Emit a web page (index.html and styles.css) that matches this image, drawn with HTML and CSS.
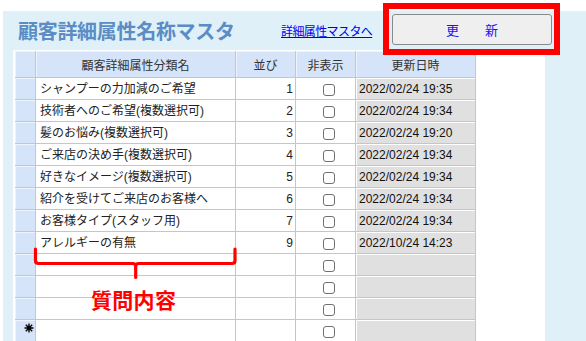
FILE: index.html
```html
<!DOCTYPE html>
<html lang="ja">
<head>
<meta charset="utf-8">
<title>顧客詳細属性名称マスタ</title>
<link rel="stylesheet" href="styles.css">
</head>
<body>
<div class="panel">
  <div class="topbar">
    <h1 class="title">顧客詳細属性名称マスタ</h1>
    <a class="link" href="#">詳細属性マスタへ</a>
    <button class="btn" type="button">更　　新</button>
  </div>
  <div class="sheet">
    <table class="grid">
      <colgroup>
        <col class="c-sel"><col class="c-name"><col class="c-ord"><col class="c-hide"><col class="c-date">
      </colgroup>
      <thead>
        <tr>
          <th class="sel"></th>
          <th>顧客詳細属性分類名</th>
          <th>並び</th>
          <th>非表示</th>
          <th>更新日時</th>
        </tr>
      </thead>
      <tbody>
        <tr><td class="sel"></td><td class="name">シャンプーの力加減のご希望</td><td class="ord">1</td><td class="hide"><input type="checkbox"></td><td class="date">2022/02/24 19:35</td></tr>
        <tr><td class="sel"></td><td class="name">技術者へのご希望(複数選択可)</td><td class="ord">2</td><td class="hide"><input type="checkbox"></td><td class="date">2022/02/24 19:34</td></tr>
        <tr><td class="sel"></td><td class="name">髪のお悩み(複数選択可)</td><td class="ord">3</td><td class="hide"><input type="checkbox"></td><td class="date">2022/02/24 19:20</td></tr>
        <tr><td class="sel"></td><td class="name">ご来店の決め手(複数選択可)</td><td class="ord">4</td><td class="hide"><input type="checkbox"></td><td class="date">2022/02/24 19:34</td></tr>
        <tr><td class="sel"></td><td class="name">好きなイメージ(複数選択可)</td><td class="ord">5</td><td class="hide"><input type="checkbox"></td><td class="date">2022/02/24 19:34</td></tr>
        <tr><td class="sel"></td><td class="name">紹介を受けてご来店のお客様へ</td><td class="ord">6</td><td class="hide"><input type="checkbox"></td><td class="date">2022/02/24 19:34</td></tr>
        <tr><td class="sel"></td><td class="name">お客様タイプ(スタッフ用)</td><td class="ord">7</td><td class="hide"><input type="checkbox"></td><td class="date">2022/02/24 19:34</td></tr>
        <tr><td class="sel"></td><td class="name">アレルギーの有無</td><td class="ord">9</td><td class="hide"><input type="checkbox"></td><td class="date">2022/10/24 14:23</td></tr>
        <tr><td class="sel"></td><td class="name"></td><td class="ord"></td><td class="hide"><input type="checkbox"></td><td class="date"></td></tr>
        <tr><td class="sel"></td><td class="name"></td><td class="ord"></td><td class="hide"><input type="checkbox"></td><td class="date"></td></tr>
        <tr><td class="sel"></td><td class="name"></td><td class="ord"></td><td class="hide"><input type="checkbox"></td><td class="date"></td></tr>
        <tr><td class="sel new"><svg class="star" width="10" height="10" viewBox="0 0 10 10"><path d="M5 0.5V9.5M0.5 5H9.5M1.8 1.8L8.2 8.2M8.2 1.8L1.8 8.2" stroke="#000" stroke-width="1.4" fill="none"/></svg></td><td class="name"></td><td class="ord"></td><td class="hide"><input type="checkbox"></td><td class="date"></td></tr>
      </tbody>
    </table>
  </div>
</div>

<div class="callout-box"></div>
<svg class="brace" width="586" height="341" viewBox="0 0 586 341">
  <path d="M35.5 249V260.5Q35.5 263.5 38.5 263.5H132.7Q135.7 263.5 135.7 266.5V277.5M135.7 266.5Q135.7 263.5 138.7 263.5H232Q235 263.5 235 260.5V249" stroke="#f00" stroke-width="3.2" fill="none" stroke-linecap="round" stroke-linejoin="round"/>
</svg>
<div class="callout-label">質問内容</div>
</body>
</html>
```

FILE: styles.css
```css
html, body {
  margin: 0;
  padding: 0;
  background: #fff;
}
body {
  font-family: "Liberation Sans", "Noto Sans CJK JP", sans-serif;
  font-size: 12px;
  color: #222;
  height: 341px;
  overflow: hidden;
}
.panel {
  margin: 11px 0 0 3px;
  background: #dff0f9;
  min-height: 340px;
}
.topbar {
  display: grid;
  grid-template-columns: 263px 111px 160px;
  align-items: center;
  height: 39px;
  padding-left: 15px;
}
.title {
  margin: 0;
  font-family: "Noto Sans CJK JP", sans-serif;
  font-size: 20px;
  font-weight: bold;
  line-height: 24px;
  color: #5b8cc4;
  white-space: nowrap;
  letter-spacing: -0.3px;
}
.link {
  font-family: "Noto Sans CJK JP", sans-serif;
  font-size: 12px;
  letter-spacing: -0.6px;
  color: #0000ee;
  text-decoration: underline;
  white-space: nowrap;
  line-height: 16px;
}
.btn {
  align-self: start;
  margin-top: 3px;
  height: 31px;
  width: 160px;
  background: #efefef;
  border: 1px solid #8a8a8a;
  border-radius: 3px;
  font-family: "Noto Sans CJK JP", sans-serif;
  font-size: 13px;
  color: #1515f0;
  padding: 0;
}
.sheet {
  margin-left: 10px;
  width: 532px;
  background: #fff;
  padding: 1px 0 0 2px;
  box-sizing: border-box;
  min-height: 300px;
}
.grid {
  border-collapse: separate;
  border-spacing: 0;
  table-layout: fixed;
  width: 461px;
}
.c-sel { width: 21px; }
.c-name { width: 200px; }
.c-ord { width: 60px; }
.c-hide { width: 60px; }
.c-date { width: 120px; }
.grid th, .grid td {
  padding: 0;
  border-right: 1px solid #c6c6c6;
  border-bottom: 1px solid #c6c6c6;
  overflow: hidden;
  white-space: nowrap;
  box-sizing: border-box;
}
.grid th {
  height: 27px;
  background: #d5e4f8;
  font-family: "Noto Sans CJK JP", sans-serif;
  font-weight: normal;
  font-size: 12px;
  color: #333;
  text-align: center;
  vertical-align: middle;
  box-shadow: inset 1px 1px 0 #eef4fd;
}
.grid td {
  height: 22px;
  vertical-align: middle;
  line-height: 14px;
}
.grid td.sel {
  background: #d5e4f8;
  box-shadow: inset 1px 1px 0 #eef4fd;
}
.grid td.name {
  padding-left: 4px;
}
.grid td.ord {
  text-align: right;
  padding-right: 2px;
}
.grid td.hide {
  padding: 3px 0 0 6px;
  text-align: center;
}
.grid td.date {
  background: #e0e0e0;
  padding-left: 3px;
  color: #111;
  box-shadow: inset 1px 1px 0 #fff;
}
.grid td.new {
  vertical-align: top;
  text-align: right;
  padding: 2px 1px 0 0;
}
.star {
  display: inline-block;
}
.hide input {
  -webkit-appearance: none;
  appearance: none;
  display: block;
  margin: 0 auto;
  width: 12px;
  height: 12px;
  border: 1px solid #707070;
  border-radius: 3px;
  background: #fff;
  box-sizing: border-box;
}
.callout-box {
  position: absolute;
  left: 383px;
  top: 3px;
  width: 177px;
  height: 52px;
  border: 6px solid #f00;
  box-sizing: border-box;
}
.brace {
  position: absolute;
  left: 0;
  top: 0;
  pointer-events: none;
}
.callout-label {
  position: absolute;
  left: 91px;
  top: 287px;
  font-family: "Noto Sans CJK JP", sans-serif;
  font-size: 21px;
  line-height: 24px;
  font-weight: bold;
  color: #f00;
  letter-spacing: 0.3px;
}
```
